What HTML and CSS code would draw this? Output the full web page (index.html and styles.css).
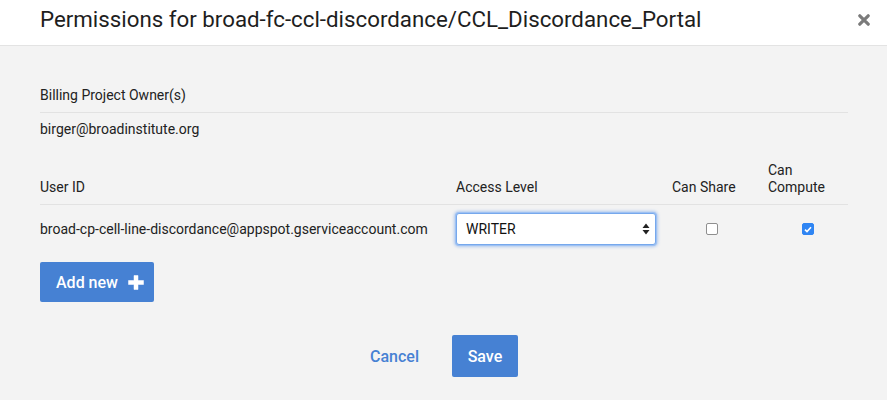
FILE: index.html
```html
<!DOCTYPE html>
<html>
<head>
<meta charset="utf-8">
<link rel="stylesheet" href="styles.css">
</head>
<body>
<div class="modal">
  <div class="modal-header">
    <h1 class="modal-title">Permissions for broad-fc-ccl-discordance/CCL_Discordance_Portal</h1>
    <button class="close-btn" aria-label="Close">
      <svg width="12" height="12" viewBox="0 0 12 12"><path d="M1.8 1.8 L10.2 10.2 M10.2 1.8 L1.8 10.2" stroke="#7b7b7b" stroke-width="3.2" stroke-linecap="round"/></svg>
    </button>
  </div>
  <div class="modal-body">
    <div class="section-label">Billing Project Owner(s)</div>
    <div class="owner">birger@broadinstitute.org</div>

    <div class="acl">
      <div class="acl-head">
        <div class="th">User ID</div>
        <div class="th">Access Level</div>
        <div class="th">Can Share</div>
        <div class="th">Can<br>Compute</div>
      </div>
      <div class="acl-row">
        <div class="td">broad-cp-cell-line-discordance@appspot.gserviceaccount.com</div>
        <div class="td">
          <div class="select">
            <span>WRITER</span>
            <svg width="8" height="12" viewBox="0 0 8 12"><path d="M4 0.5 L7.5 5 L0.5 5 Z M4 11.5 L7.5 7 L0.5 7 Z" fill="#222"/></svg>
          </div>
        </div>
        <div class="td check-cell"><span class="cb"></span></div>
        <div class="td check-cell"><span class="cb checked"><svg width="8" height="7" viewBox="0 0 8 7"><path d="M1 3.6 L3 5.6 L7 1.2" stroke="#fff" stroke-width="1.6" fill="none"/></svg></span></div>
      </div>
    </div>

    <button class="btn btn-add">Add new
      <svg width="16" height="15" viewBox="0 0 16 15"><path d="M6 0.5 H10 V5.5 H15.5 V9.5 H10 V14.5 H6 V9.5 H0.5 V5.5 H6 Z" fill="#fff" stroke="#fff" stroke-width="0.5" stroke-linejoin="round"/></svg>
    </button>

    <div class="footer">
      <button class="link-btn">Cancel</button>
      <button class="btn btn-save">Save</button>
    </div>
  </div>
</div>
</body>
</html>
```

FILE: styles.css
```css
* { box-sizing: border-box; }
html, body {
  margin: 0;
  padding: 0;
  background: #f3f3f3;
  font-family: Roboto, "Noto Sans", sans-serif;
  color: #222;
}
.modal {
  width: 887px;
  height: 400px;
  background: #f3f3f3;
}
.modal-header {
  height: 46px;
  background: #fff;
  border-bottom: 1px solid #e3e3e3;
  display: flex;
  align-items: flex-start;
  justify-content: space-between;
  padding: 6px 17px 0 40px;
}
.modal-title {
  margin: 0;
  font-size: 22.3px;
  line-height: 26px;
  font-weight: 400;
  color: #1e1e1e;
  white-space: nowrap;
}
.close-btn {
  border: 0;
  background: none;
  padding: 0;
  margin-top: 8px;
  width: 12px;
  height: 12px;
  display: flex;
}
.modal-body {
  padding: 39px 39px 0 40px;
  font-size: 14px;
  line-height: 20px;
}
.section-label {
  padding-bottom: 7px;
  border-bottom: 1px solid #e2e2e2;
}
.owner {
  padding-top: 6px;
}
.acl {
  margin-top: 23px;
}
.acl-head, .acl-row {
  display: grid;
  grid-template-columns: 416px 216px 96px 80px;
}
.acl-head {
  align-items: end;
  padding-bottom: 8px;
  border-bottom: 1px solid #e2e2e2;
}
.th {
  line-height: 17px;
}
.acl-row {
  align-items: center;
  padding: 8px 0;
}
.select {
  width: 200px;
  height: 32px;
  background: #fff;
  border: 1px solid #76a8ec;
  border-radius: 3px;
  box-shadow: 0 0 0 1px #9ec1f3, 0 0 3px 2px rgba(120,165,235,0.55);
  display: flex;
  align-items: center;
  justify-content: space-between;
  padding: 0 5px 0 9px;
  font-size: 14px;
  color: #111;
}
.check-cell {
  display: flex;
  justify-content: center;
  width: 80px;
}
.cb {
  width: 12px;
  height: 12px;
  border: 1px solid #8f8f8f;
  border-radius: 2px;
  background: #fff;
  display: flex;
  align-items: center;
  justify-content: center;
}
.cb.checked {
  background: #2f85f3;
  border-color: #2f85f3;
}
.btn {
  border: 0;
  border-radius: 2px;
  background: #4681d3;
  color: #fff;
  font-family: Roboto, "Noto Sans", sans-serif;
  font-size: 16px;
  font-weight: 500;
  display: flex;
  align-items: center;
  white-space: nowrap;
  cursor: pointer;
}
.btn-add {
  margin-top: 9px;
  height: 40px;
  padding: 0 10px 0 16px;
  gap: 10px;
}
.footer {
  margin-top: 33px;
  display: flex;
  justify-content: center;
  align-items: center;
  gap: 33px;
}
.link-btn {
  border: 0;
  background: none;
  padding: 0;
  color: #4681d3;
  font-family: Roboto, "Noto Sans", sans-serif;
  font-size: 16px;
  font-weight: 500;
}
.btn-save {
  height: 42px;
  width: 66px;
  justify-content: center;
}
```
